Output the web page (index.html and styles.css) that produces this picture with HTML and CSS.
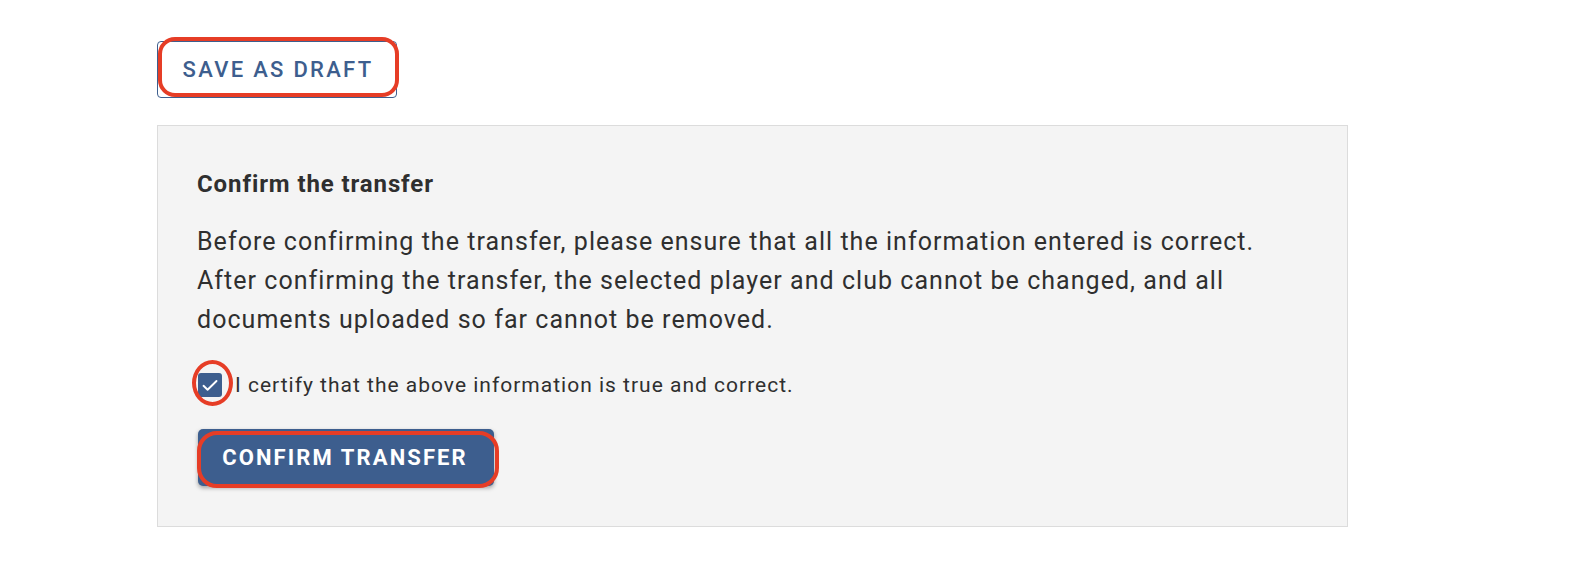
FILE: index.html
```html
<!DOCTYPE html>
<html lang="en">
<head>
<meta charset="utf-8">
<title>Confirm the transfer</title>
<link rel="stylesheet" href="styles.css">
</head>
<body>
<div class="page">
  <div class="draft-wrap">
    <button class="btn-draft" type="button">SAVE AS DRAFT</button>
    <span class="ring ring-draft"></span>
  </div>
  <section class="panel">
    <h2 class="panel-title">Confirm the transfer</h2>
    <p class="panel-text">Before confirming the transfer, please ensure that all the information entered is correct. After confirming the transfer, the selected player and club cannot be changed, and all documents uploaded so far cannot be removed.</p>
    <label class="certify">
      <span class="check-wrap">
        <span class="checkbox">
          <svg width="24" height="24" viewBox="0 0 24 24"><polyline points="5.5,12.8 9.6,16.8 18.5,8" fill="none" stroke="#fff" stroke-width="1.9" stroke-linecap="round" stroke-linejoin="round"/></svg>
        </span>
        <span class="ring ring-check"></span>
      </span>
      <span class="certify-text">I certify that the above information is true and correct.</span>
    </label>
    <div class="confirm-wrap">
      <button class="btn-confirm" type="button">CONFIRM TRANSFER</button>
      <span class="ring ring-confirm"></span>
    </div>
  </section>
</div>
</body>
</html>
```

FILE: styles.css
```css
* { box-sizing: border-box; }
html, body { margin: 0; padding: 0; background: #fff; }
body { font-family: Roboto, "Noto Sans", Arial, sans-serif; color: #2f2f2f; }

.page { padding: 41px 0 0 157px; }

.draft-wrap { position: relative; display: inline-block; vertical-align: top; }
.btn-draft {
  display: block;
  width: 240px;
  height: 57px;
  border: 1px solid #3d5e8e;
  border-radius: 4px;
  background: #fff;
  color: #3d5e8e;
  font-family: Roboto, Arial, sans-serif;
  font-weight: 500;
  font-size: 22px;
  letter-spacing: 2.3px;
  padding: 0 0 0 2px;
}

.ring { position: absolute; border: 4px solid #e63d26; pointer-events: none; }
.ring-draft { top: -4px; left: 1px; right: -2px; bottom: 1px; border-radius: 17px; }

.panel {
  margin-top: 27px;
  width: 1191px;
  height: 402px;
  background: #f4f4f4;
  border: 1px solid #dcdcdc;
  padding: 44px 40px 0 39px;
}
.panel-title {
  margin: 0;
  font-size: 24px;
  font-weight: 700;
  line-height: 28px;
  letter-spacing: 0.9px;
  color: #2f2f2f;
}
.panel-text {
  margin: 24px 0 0 0;
  font-size: 25px;
  line-height: 39px;
  letter-spacing: 1.04px;
  max-width: 1090px;
  color: #2f2f2f;
}

.certify {
  display: flex;
  align-items: center;
  margin-top: 34px;
  gap: 13px;
  height: 24px;
}
.check-wrap { position: relative; display: inline-block; width: 24px; height: 24px; flex: none; margin-left: 1px; }
.checkbox {
  display: block;
  width: 24px;
  height: 24px;
  background: #3d5e8e;
  border-radius: 3px;
}
.checkbox svg { display: block; }
.ring-check { top: -13px; left: -6px; width: 41px; height: 46px; border-radius: 50%; }
.certify-text { font-size: 21px; line-height: 24px; letter-spacing: 1px; color: #2f2f2f; }

.confirm-wrap { position: relative; display: inline-block; margin-top: 32px; margin-left: 1px; }
.btn-confirm {
  display: block;
  width: 296px;
  height: 57px;
  border: 0;
  border-radius: 5px;
  background: #3d5e8e;
  color: #fff;
  font-family: Roboto, Arial, sans-serif;
  font-weight: 700;
  font-size: 22px;
  letter-spacing: 2.1px;
  padding: 0 2px 0 0;
  box-shadow: 0 2px 4px rgba(0,0,0,0.35);
}
.ring-confirm { top: 2px; left: -1px; right: -5px; bottom: -2px; border-radius: 20px; }
```
